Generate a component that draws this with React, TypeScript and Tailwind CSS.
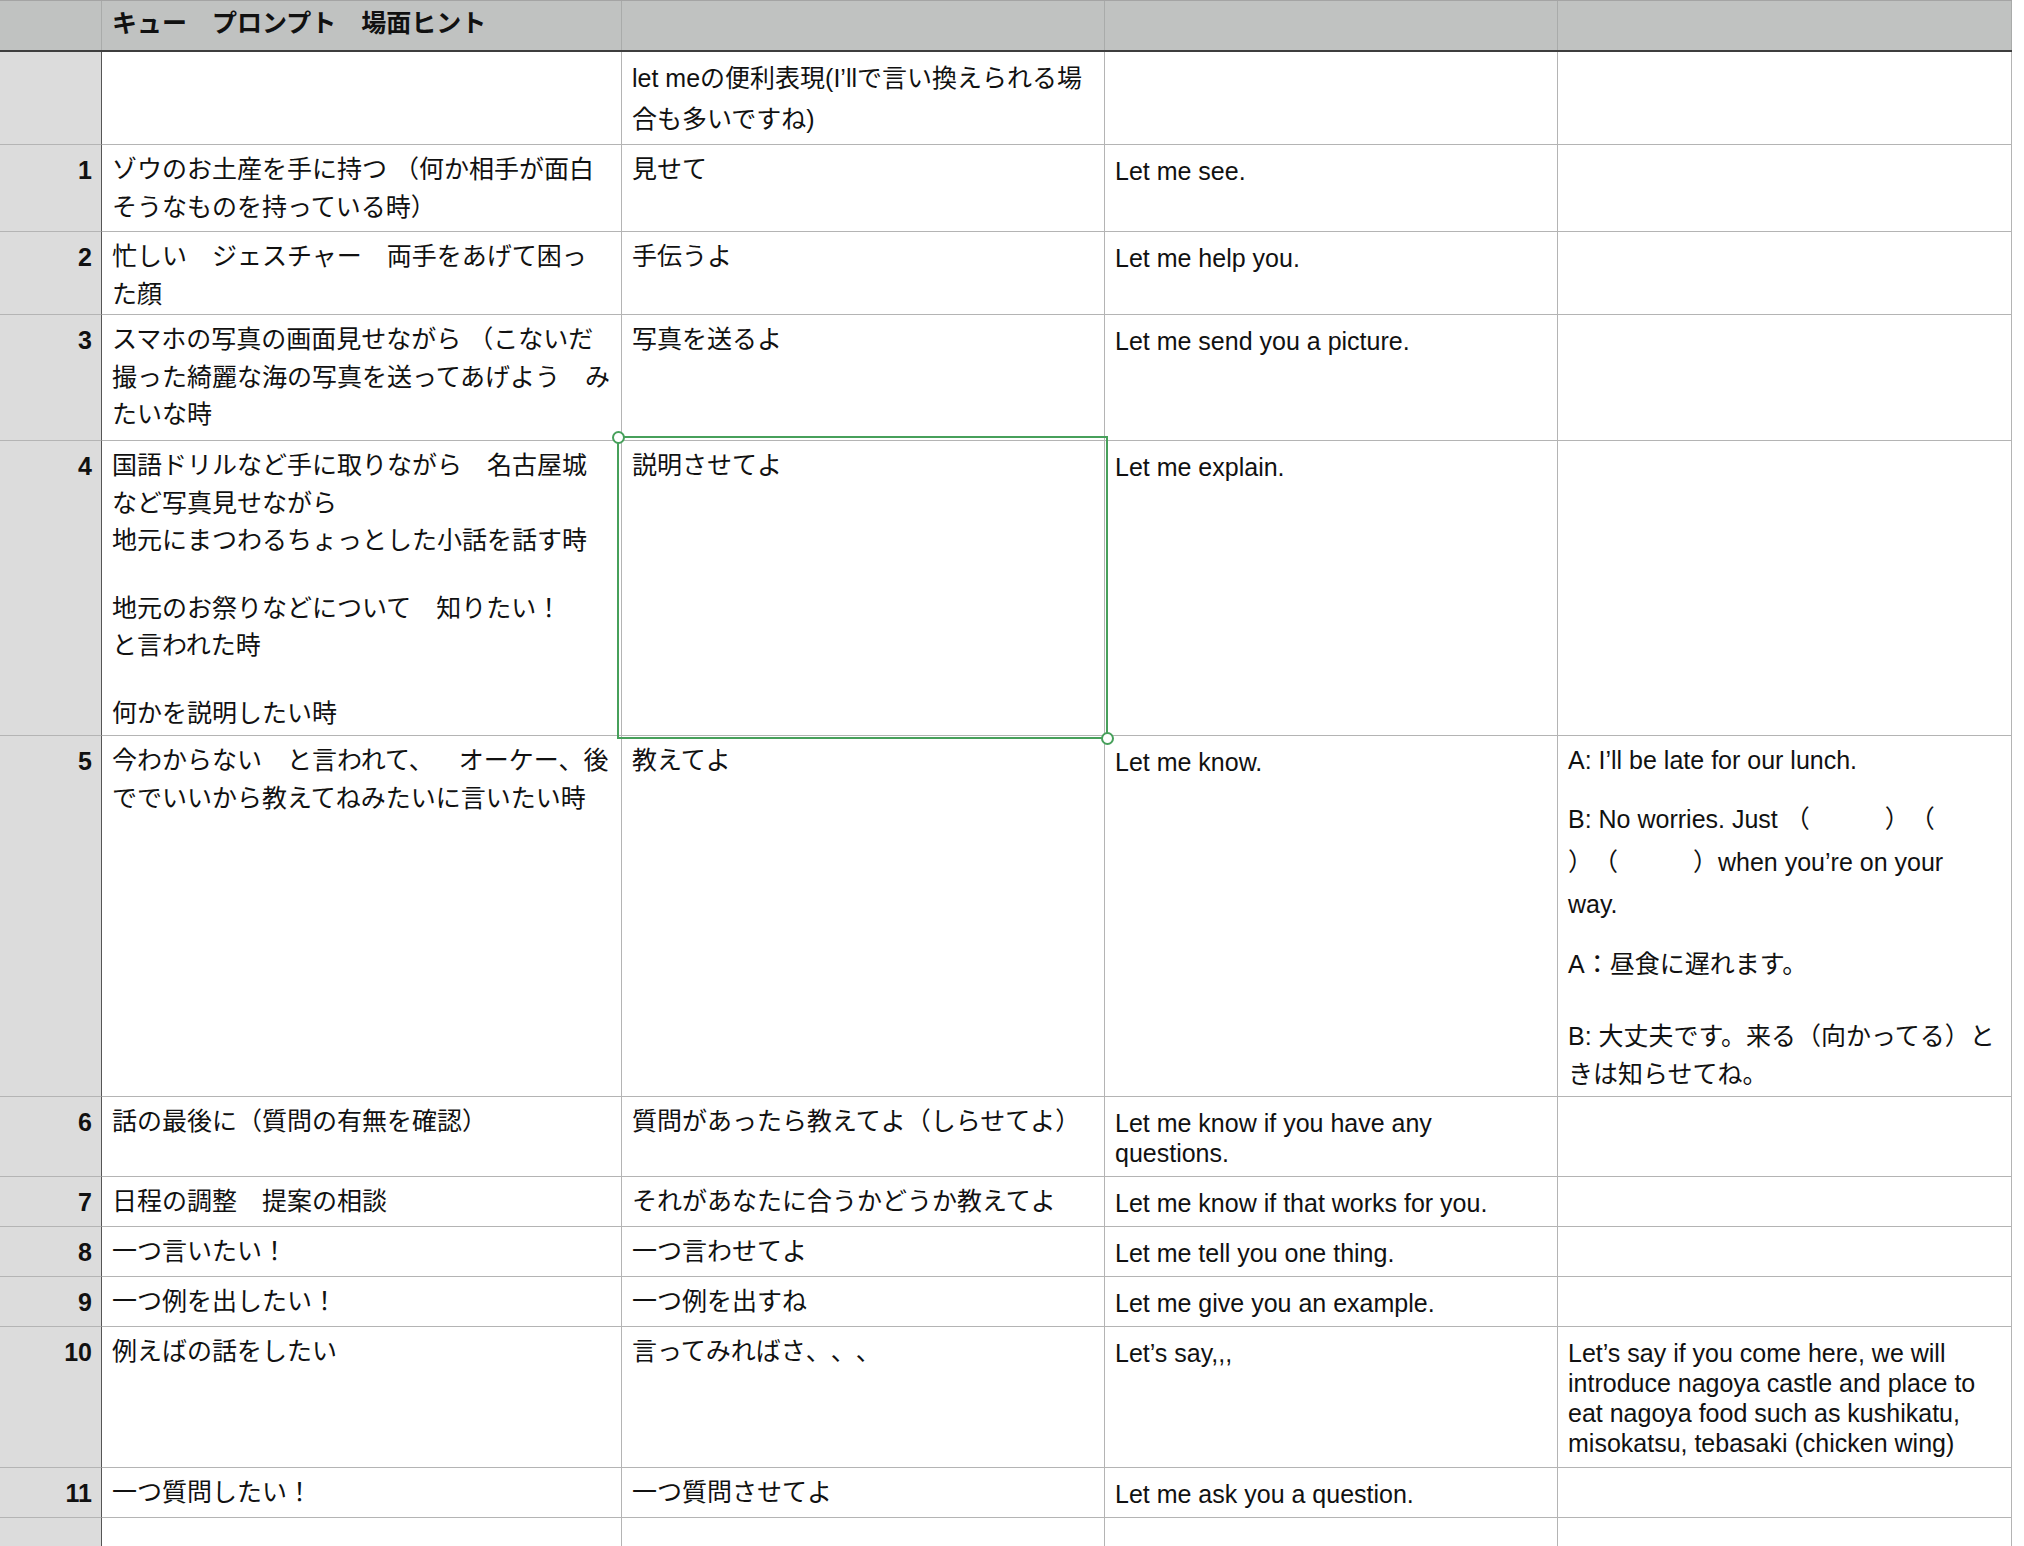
import React from 'react';

type L = { t: string; c: string };
const J = (t: string): L => ({ t, c: 'h-[37.5px] leading-[37.5px]' });
const E = (t: string): L => ({ t, c: 'h-[30px] leading-[30px]' });
const W = (t: string): L => ({ t, c: 'h-[41px] leading-[41px]' });
const B = (): L => ({ t: '', c: 'h-[30px]' });

type Row = { h: string; n: string; a: L[]; b: L[]; c: L[]; d: L[] | 'custom' };

const rows: Row[] = [
  {
    h: 'h-[93px]',
    n: '',
    a: [],
    b: [W('let meの便利表現(I’llで言い換えられる場'), W('合も多いですね)')],
    c: [],
    d: [],
  },
  {
    h: 'h-[87px]',
    n: '1',
    a: [J('ゾウのお土産を手に持つ （何か相手が面白'), J('そうなものを持っている時）')],
    b: [J('見せて')],
    c: [E('Let me see.')],
    d: [],
  },
  {
    h: 'h-[83px]',
    n: '2',
    a: [J('忙しい　ジェスチャー　両手をあげて困っ'), J('た顔')],
    b: [J('手伝うよ')],
    c: [E('Let me help you.')],
    d: [],
  },
  {
    h: 'h-[126px]',
    n: '3',
    a: [
      J('スマホの写真の画面見せながら （こないだ'),
      J('撮った綺麗な海の写真を送ってあげよう　み'),
      J('たいな時'),
    ],
    b: [J('写真を送るよ')],
    c: [E('Let me send you a picture.')],
    d: [],
  },
  {
    h: 'h-[295px]',
    n: '4',
    a: [
      J('国語ドリルなど手に取りながら　名古屋城'),
      J('など写真見せながら'),
      J('地元にまつわるちょっとした小話を話す時'),
      B(),
      J('地元のお祭りなどについて　知りたい！'),
      J('と言われた時'),
      B(),
      J('何かを説明したい時'),
    ],
    b: [J('説明させてよ')],
    c: [E('Let me explain.')],
    d: [],
  },
  {
    h: 'h-[361px]',
    n: '5',
    a: [J('今わからない　と言われて、　オーケー、後'), J('ででいいから教えてねみたいに言いたい時')],
    b: [J('教えてよ')],
    c: [E('Let me know.')],
    d: 'custom',
  },
  {
    h: 'h-[80px]',
    n: '6',
    a: [J('話の最後に（質問の有無を確認）')],
    b: [J('質問があったら教えてよ（しらせてよ）')],
    c: [E('Let me know if you have any'), E('questions.')],
    d: [],
  },
  {
    h: 'h-[50px]',
    n: '7',
    a: [J('日程の調整　提案の相談')],
    b: [J('それがあなたに合うかどうか教えてよ')],
    c: [E('Let me know if that works for you.')],
    d: [],
  },
  {
    h: 'h-[50px]',
    n: '8',
    a: [J('一つ言いたい！')],
    b: [J('一つ言わせてよ')],
    c: [E('Let me tell you one thing.')],
    d: [],
  },
  {
    h: 'h-[50px]',
    n: '9',
    a: [J('一つ例を出したい！')],
    b: [J('一つ例を出すね')],
    c: [E('Let me give you an example.')],
    d: [],
  },
  {
    h: 'h-[141px]',
    n: '10',
    a: [J('例えばの話をしたい')],
    b: [J('言ってみればさ、、、')],
    c: [E('Let’s say,,,')],
    d: [
      E('Let’s say if you come here, we will'),
      E('introduce nagoya castle and place to'),
      E('eat nagoya food such as kushikatu,'),
      E('misokatsu, tebasaki (chicken wing)'),
    ],
  },
  {
    h: 'h-[50px]',
    n: '11',
    a: [J('一つ質問したい！')],
    b: [J('一つ質問させてよ')],
    c: [E('Let me ask you a question.')],
    d: [],
  },
  {
    h: 'h-[60px]',
    n: '',
    a: [],
    b: [],
    c: [],
    d: [],
  },
];

function Cell({ w, lines }: { w: string; lines: L[] }) {
  const first = lines[0];
  const pt = first && first.c.startsWith('h-[30px] leading') ? 'pt-[11px]' : 'pt-[6px]';
  return (
    <div className={`${w} shrink-0 border-r border-b border-[#b4b4b4] pl-[10px] ${pt}`}>
      {lines.map((l, i) => (
        <div key={i} className={`${l.c} whitespace-nowrap`}>
          {l.t}
        </div>
      ))}
    </div>
  );
}

function CustomD() {
  return (
    <div className="w-[454px] shrink-0 border-r border-b border-[#b4b4b4] pl-[10px] whitespace-nowrap">
      <div className="mt-[5px] h-[38px] leading-[38px]">A: I’ll be late for our lunch.</div>
      <div className="mt-[19px] h-[42.5px] leading-[42.5px]">B: No worries. Just （　　　）（</div>
      <div className="h-[42.5px] leading-[42.5px]">）（　　　）when you’re on your</div>
      <div className="h-[42.5px] leading-[42.5px]">way.</div>
      <div className="mt-[19.5px] h-[38px] leading-[38px]">A：昼食に遅れます。</div>
      <div className="mt-[34px] h-[38px] leading-[38px]">B: 大丈夫です。来る（向かってる）と</div>
      <div className="h-[38px] leading-[38px]">きは知らせてね。</div>
    </div>
  );
}

export default function App() {
  return (
    <div className="w-[2024px] h-[1546px] overflow-hidden bg-white text-[25px] text-[#111111] [text-spacing-trim:space-all] font-['Liberation_Sans','Noto_Sans_CJK_JP',sans-serif]">
      <div className="relative w-[2012px]">
        {/* header */}
        <div className="flex h-[52px] border-t border-b-2 border-t-[#a4a4a4] border-b-[#3e3e3e] bg-[#c0c2c1]">
          <div className="w-[102px] shrink-0 border-r border-[#a9abaa]" />
          <div className="w-[520px] shrink-0 border-r border-[#a9abaa] pl-[10px] pt-[4px] font-bold leading-[37.5px] whitespace-nowrap">
            キュー　プロンプト　場面ヒント
          </div>
          <div className="w-[483px] shrink-0 border-r border-[#a9abaa]" />
          <div className="w-[453px] shrink-0 border-r border-[#a9abaa]" />
          <div className="w-[454px] shrink-0 border-r border-[#a9abaa]" />
        </div>

        {rows.map((r, i) => (
          <div key={i} className={`flex ${r.h}`}>
            <div className="w-[102px] shrink-0 bg-[#dcdcdc] border-r border-r-[#555555] border-b border-b-[#b4b4b4] pr-[9px] pt-[10px] text-right font-bold leading-[30px]">
              {r.n}
            </div>
            <Cell w="w-[520px]" lines={r.a} />
            <Cell w="w-[483px]" lines={r.b} />
            <Cell w="w-[453px]" lines={r.c} />
            {r.d === 'custom' ? <CustomD /> : <Cell w="w-[454px]" lines={r.d} />}
          </div>
        ))}

        {/* selection */}
        <div className="absolute left-[617px] top-[436px] w-[491px] h-[303px] border-2 border-[#47a05b] pointer-events-none" />
        <div className="absolute left-[612px] top-[431px] w-[13px] h-[13px] rounded-full border-2 border-[#47a05b] bg-white" />
        <div className="absolute left-[1101px] top-[732px] w-[13px] h-[13px] rounded-full border-2 border-[#47a05b] bg-white" />
      </div>
    </div>
  );
}
